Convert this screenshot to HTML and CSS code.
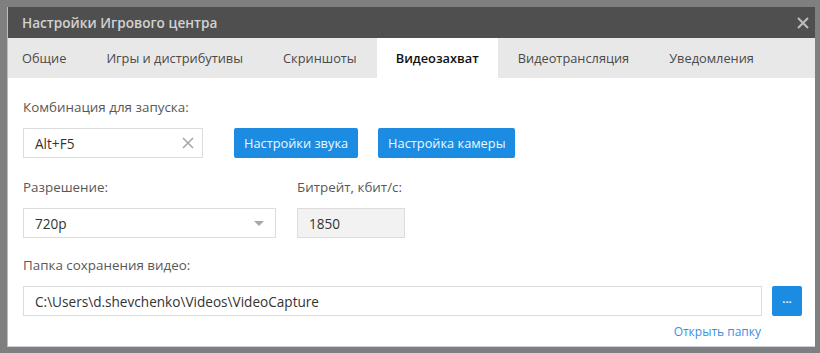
FILE: index.html
```html
<!DOCTYPE html>
<html lang="ru">
<head>
<meta charset="utf-8">
<title>Настройки Игрового центра</title>
<link rel="stylesheet" href="styles.css">
</head>
<body>
<div class="window">
  <div class="titlebar">
    <span class="title">Настройки Игрового центра</span>
    <span class="close" aria-label="Закрыть">
      <svg width="12" height="12" viewBox="0 0 12 12"><path d="M1 1L11 11M11 1L1 11" stroke="#bdbdbd" stroke-width="2" fill="none"/></svg>
    </span>
  </div>
  <div class="tabs">
    <div class="tab first">Общие</div>
    <div class="tab">Игры и дистрибутивы</div>
    <div class="tab">Скриншоты</div>
    <div class="tab active">Видеозахват</div>
    <div class="tab">Видеотрансляция</div>
    <div class="tab">Уведомления</div>
  </div>
  <div class="content">
    <div class="label">Комбинация для запуска:</div>
    <div class="row">
      <div class="field hotkey">
        <span>Alt+F5</span>
        <svg class="clear" width="12" height="12" viewBox="0 0 12 12"><path d="M1 1L11 11M11 1L1 11" stroke="#a8a8a8" stroke-width="1.6" fill="none"/></svg>
      </div>
      <div class="buttons">
        <div class="btn">Настройки звука</div>
        <div class="btn">Настройка камеры</div>
      </div>
    </div>
    <div class="row settings">
      <div class="group res">
        <div class="label">Разрешение:</div>
        <div class="field select">
          <span>720p</span>
          <span class="arrow"></span>
        </div>
      </div>
      <div class="group bitrate">
        <div class="label">Битрейт, кбит/с:</div>
        <div class="field disabled"><span>1850</span></div>
      </div>
    </div>
    <div class="label">Папка сохранения видео:</div>
    <div class="row path-row">
      <div class="field path"><span>C:\Users\d.shevchenko\Videos\VideoCapture</span></div>
      <div class="btn browse">...</div>
    </div>
    <div class="open-link"><a href="#">Открыть папку</a></div>
  </div>
</div>
</body>
</html>
```

FILE: styles.css
```css
* { box-sizing: border-box; }
html, body { margin: 0; padding: 0; }
body {
  background: #7f7f7f;
  width: 820px;
  height: 353px;
  overflow: hidden;
  font-family: "Open Sans", "Noto Sans", sans-serif;
  font-size: 13px;
  color: #555;
}
.window {
  margin: 7px 5px 0 7px;
  width: 808px;
  height: 340px;
  background: #fff;
  border-left: 1px solid #b9bcc2;
  border-bottom: 1px solid #cdd3dc;
  display: flex;
  flex-direction: column;
}
.titlebar {
  height: 31px;
  background: #4f4f4f;
  display: flex;
  align-items: center;
  justify-content: space-between;
  padding: 0 6px 0 14px;
}
.title {
  color: #d2d2d2;
  font-weight: 600;
  font-size: 13.6px;
}
.close { display: flex; }
.tabs {
  height: 40px;
  background: #e8e8e8;
  display: flex;
  font-size: 12.8px;
}
.tab {
  padding: 0 20px;
  line-height: 40px;
  color: #4a4a4a;
}
.tab.first { padding-left: 14px; }
.tab.active {
  background: #fff;
  color: #111;
  font-weight: 600;
  padding: 0 19px;
}
.content {
  padding: 20px 13px 0 15px;
}
.label {
  line-height: 18px;
  margin-bottom: 12px;
  color: #585858;
  font-size: 13.4px;
}
.row { display: flex; }
.field {
  height: 30px;
  border: 1px solid #dcdcdc;
  padding: 0 11px;
  display: flex;
  align-items: center;
  justify-content: space-between;
  color: #333;
  font-size: 13.6px;
}
.hotkey { width: 180px; padding-right: 8px; }
.buttons { display: flex; gap: 20px; margin-left: 31px; }
.btn {
  height: 30px;
  line-height: 30px;
  padding: 0 10px;
  background: #1b8ce2;
  color: #eef7ff;
  border-radius: 2px;
  font-size: 12.8px;
}
.settings { margin-top: 20px; margin-bottom: 18px; }
.res { width: 253px; margin-right: 21px; }
.bitrate { width: 108px; }
.select { padding-right: 11px; }
.arrow {
  width: 0; height: 0;
  border-left: 5px solid transparent;
  border-right: 5px solid transparent;
  border-top: 5px solid #a9a9a9;
}
.disabled { background: #f2f2f2; }
.path-row { gap: 10px; }
.path { flex: 1; }
.browse { width: 30px; padding: 0; text-align: center; line-height: 26px; font-weight: 700; font-size: 11px; }
.open-link {
  text-align: right;
  padding-right: 41px;
  margin-top: 7px;
  line-height: 16px;
}
.open-link a {
  color: #3b8fe4;
  text-decoration: none;
  font-size: 12px;
}
```
